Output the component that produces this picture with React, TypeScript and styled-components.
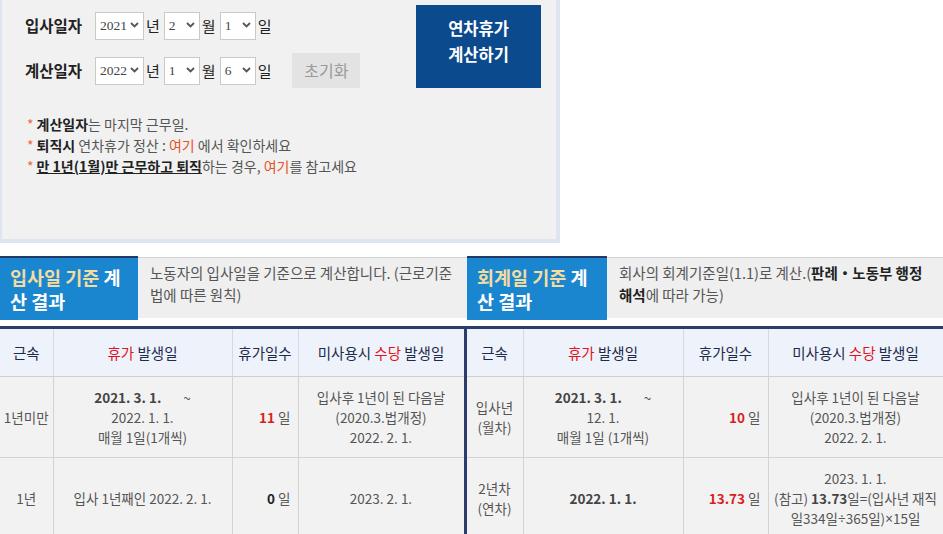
import React from 'react';
import styled, { createGlobalStyle } from 'styled-components';

const GlobalStyle = createGlobalStyle`
  html, body {
    margin: 0;
    padding: 0;
    overflow: hidden;
    background: #fff;
  }
  body {
    font-family: 'Noto Sans CJK KR', 'Noto Sans', sans-serif;
    color: #555;
  }
  * {
    box-sizing: border-box;
  }
`;

const Page = styled.div`
  width: 943px;
`;

// 상단 입력 패널
const Panel = styled.div`
  width: 560px;
  height: 243px;
  background: #f1f1f1;
  border: 4px solid #dee5f0;
  border-top: none;
  border-left-width: 2px;
  display: flex;
  justify-content: space-between;
  align-items: flex-start;
  padding: 5px 15px 0 23px;
`;

const FormCol = styled.div`
  display: flex;
  flex-direction: column;
  padding-top: 2.5px;
`;

const FormRows = styled.div`
  display: flex;
  flex-direction: column;
  gap: 10px;
`;

const FormRow = styled.div`
  display: flex;
  align-items: center;
  height: 35px;
`;

const Label = styled.div`
  width: 70px;
  font-size: 15.5px;
  font-weight: 700;
  color: #222;
`;

const SelectWrap = styled.div<{ $w: number }>`
  position: relative;
  width: ${(p) => p.$w}px;
  height: 28px;
`;

const Select = styled.select`
  appearance: none;
  -webkit-appearance: none;
  width: 100%;
  height: 100%;
  border: 1px solid #c9c9c9;
  border-radius: 0;
  background: #fff;
  padding: 0 0 0 4px;
  font-family: 'Liberation Serif', serif;
  font-size: 13.5px;
  color: #444;
  outline: none;
`;

const Chevron = styled.svg`
  position: absolute;
  right: 5px;
  top: 11px;
  pointer-events: none;
`;

const Unit = styled.span`
  margin: 0 4px 0 2px;
  font-size: 15px;
  color: #222;
`;

const ResetButton = styled.button`
  margin-left: 17px;
  width: 68px;
  height: 35px;
  border: none;
  background: #e3e3e3;
  color: #9a9a9a;
  font-family: inherit;
  font-size: 16px;
  padding: 0;
`;

const Notes = styled.div`
  margin-top: 26px;
  padding-left: 2px;
  font-size: 14px;
  line-height: 21px;
  color: #555;
`;

const Star = styled.span`
  color: #ea6a37;
  margin-right: 3px;
`;

const Strong = styled.b<{ $underline?: boolean }>`
  color: #222;
  font-weight: 700;
  text-decoration: ${(p) => (p.$underline ? 'underline' : 'none')};
`;

const Here = styled.span`
  color: #e8501f;
`;

const CalcButton = styled.button`
  width: 125px;
  height: 83px;
  border: none;
  background: #0b4a8c;
  color: #fff;
  font-family: inherit;
  font-size: 16.5px;
  font-weight: 700;
  line-height: 26px;
  padding: 10px 0 0;
  align-self: flex-start;
  display: flex;
  flex-direction: column;
  align-items: center;
  justify-content: flex-start;
`;

// 결과 제목 영역
const ResultHead = styled.div`
  margin-top: 13px;
  display: flex;
  height: 64px;
`;

const Half = styled.div<{ $w: number }>`
  width: ${(p) => p.$w}px;
  display: flex;
`;

const TitleBox = styled.div<{ $w: number }>`
  width: ${(p) => p.$w}px;
  background: #1a86cf;
  border-top: 2px solid #233a66;
  color: #fff;
  font-size: 18.5px;
  font-weight: 700;
  line-height: 24px;
  padding: 7px 0 0 10px;
  white-space: nowrap;
  overflow: hidden;
`;

const TitleLine = styled.div``;

const Accent = styled.span`
  color: #f4dca0;
`;

const Desc = styled.div`
  flex: 1;
  margin-top: 1px;
  margin-bottom: 2px;
  background: #efefef;
  border-top: 1px solid #d2d2d2;
  padding: 4px 6px 0 12px;
  font-size: 14.5px;
  line-height: 22px;
  color: #555;
  white-space: nowrap;
  overflow: hidden;
`;

// 결과 표
const Table = styled.table`
  margin-top: 6px;
  width: 943px;
  border-collapse: collapse;
  table-layout: fixed;
  border-top: 3px solid #2c3c6c;
`;

const Th = styled.th<{ $divider?: boolean }>`
  height: 49px;
  background: #eef2fa;
  font-size: 14.5px;
  font-weight: 400;
  color: #1d2b4c;
  border-right: 1px solid #d6d9e0;
  border-bottom: 1px solid #cfcfcf;
  border-left: ${(p) => (p.$divider ? '3px solid #2c3c6c' : 'none')};
  padding: 0;
  white-space: nowrap;
`;

const Td = styled.td<{ $divider?: boolean; $right?: boolean }>`
  height: 81px;
  background: #f2f2f2;
  font-size: 13.5px;
  line-height: 20px;
  color: #555;
  text-align: ${(p) => (p.$right ? 'right' : 'center')};
  vertical-align: middle;
  border-right: 1px solid #d3d3d3;
  border-bottom: 1px solid #d3d3d3;
  border-left: ${(p) => (p.$divider ? '3px solid #2c3c6c' : 'none')};
  padding: ${(p) => (p.$right ? '0 7px 0 2px' : '0 1px')};
`;

const Red = styled.span`
  color: #e0141e;
`;

const Num = styled.b<{ $red?: boolean }>`
  font-weight: 700;
  color: ${(p) => (p.$red ? '#d81e1e' : '#222')};
`;

const DateB = styled.b`
  font-weight: 700;
  color: #444;
`;

const Tilde = styled.span`
  margin-left: 22px;
`;

const Sym = styled.span`
  font-family: 'Noto Sans', 'DejaVu Sans', sans-serif;
`;

const Line = styled.div`
  white-space: nowrap;
`;

const ChevronIcon = () => (
  <Chevron width="9" height="6" viewBox="0 0 9 6">
    <path d="M1 1 L4.5 4.5 L8 1" fill="none" stroke="#555" strokeWidth="1.8" />
  </Chevron>
);

interface DateSel {
  year: string;
  month: string;
  day: string;
}

const DateSelects = ({ value }: { value: DateSel }) => (
  <>
    <SelectWrap $w={49}>
      <Select defaultValue={value.year}>
        {['2019', '2020', '2021', '2022', '2023'].map((y) => (
          <option key={y}>{y}</option>
        ))}
      </Select>
      <ChevronIcon />
    </SelectWrap>
    <Unit>년</Unit>
    <SelectWrap $w={36}>
      <Select defaultValue={value.month}>
        {Array.from({ length: 12 }, (_, i) => String(i + 1)).map((m) => (
          <option key={m}>{m}</option>
        ))}
      </Select>
      <ChevronIcon />
    </SelectWrap>
    <Unit>월</Unit>
    <SelectWrap $w={36}>
      <Select defaultValue={value.day}>
        {Array.from({ length: 31 }, (_, i) => String(i + 1)).map((d) => (
          <option key={d}>{d}</option>
        ))}
      </Select>
      <ChevronIcon />
    </SelectWrap>
    <Unit>일</Unit>
  </>
);

const App = () => {
  return (
    <Page>
      <GlobalStyle />
      <Panel>
        <FormCol>
          <FormRows>
            <FormRow>
              <Label>입사일자</Label>
              <DateSelects value={{ year: '2021', month: '2', day: '1' }} />
            </FormRow>
            <FormRow>
              <Label>계산일자</Label>
              <DateSelects value={{ year: '2022', month: '1', day: '6' }} />
              <ResetButton>초기화</ResetButton>
            </FormRow>
          </FormRows>
          <Notes>
            <div>
              <Star>*</Star>
              <Strong>계산일자</Strong>는 마지막 근무일.
            </div>
            <div>
              <Star>*</Star>
              <Strong>퇴직시</Strong> 연차휴가 정산 : <Here>여기</Here> 에서 확인하세요
            </div>
            <div>
              <Star>*</Star>
              <Strong $underline>만 1년(1월)만 근무하고 퇴직</Strong>하는 경우, <Here>여기</Here>를
              참고세요
            </div>
          </Notes>
        </FormCol>
        <CalcButton>
          <span>연차휴가</span>
          <span>계산하기</span>
        </CalcButton>
      </Panel>

      <ResultHead>
        <Half $w={467}>
          <TitleBox $w={138}>
            <TitleLine>
              <Accent>입사일 기준</Accent> 계
            </TitleLine>
            <TitleLine>산 결과</TitleLine>
          </TitleBox>
          <Desc>
            노동자의 입사일을 기준으로 계산합니다. (근로기준
            <br />
            법에 따른 원칙)
          </Desc>
        </Half>
        <Half $w={476}>
          <TitleBox $w={140}>
            <TitleLine>
              <Accent>회계일 기준</Accent> 계
            </TitleLine>
            <TitleLine>산 결과</TitleLine>
          </TitleBox>
          <Desc>
            회사의 회계기준일(1.1)로 계산.(<Strong>판례・노동부 행정</Strong>
            <br />
            <Strong>해석</Strong>에 따라 가능)
          </Desc>
        </Half>
      </ResultHead>

      <Table>
        <colgroup>
          <col style={{ width: 53 }} />
          <col style={{ width: 179 }} />
          <col style={{ width: 66 }} />
          <col style={{ width: 167 }} />
          <col style={{ width: 58 }} />
          <col style={{ width: 160 }} />
          <col style={{ width: 85 }} />
          <col style={{ width: 175 }} />
        </colgroup>
        <thead>
          <tr>
            <Th>근속</Th>
            <Th>
              <Red>휴가</Red> 발생일
            </Th>
            <Th>휴가일수</Th>
            <Th>
              미사용시 <Red>수당</Red> 발생일
            </Th>
            <Th $divider>근속</Th>
            <Th>
              <Red>휴가</Red> 발생일
            </Th>
            <Th>휴가일수</Th>
            <Th>
              미사용시 <Red>수당</Red> 발생일
            </Th>
          </tr>
        </thead>
        <tbody>
          <tr>
            <Td>1년미만</Td>
            <Td>
              <Line>
                <DateB>2021. 3. 1.</DateB>
                <Tilde>~</Tilde>
              </Line>
              <Line>2022. 1. 1.</Line>
              <Line>매월 1일(1개씩)</Line>
            </Td>
            <Td $right>
              <Num $red>11</Num> 일
            </Td>
            <Td>
              <Line>입사후 1년이 된 다음날</Line>
              <Line>(2020.3.법개정)</Line>
              <Line>2022. 2. 1.</Line>
            </Td>
            <Td $divider>
              <Line>입사년</Line>
              <Line>(월차)</Line>
            </Td>
            <Td>
              <Line>
                <DateB>2021. 3. 1.</DateB>
                <Tilde>~</Tilde>
              </Line>
              <Line>12. 1.</Line>
              <Line>매월 1일 (1개씩)</Line>
            </Td>
            <Td $right>
              <Num $red>10</Num> 일
            </Td>
            <Td>
              <Line>입사후 1년이 된 다음날</Line>
              <Line>(2020.3.법개정)</Line>
              <Line>2022. 2. 1.</Line>
            </Td>
          </tr>
          <tr>
            <Td>1년</Td>
            <Td>입사 1년째인 2022. 2. 1.</Td>
            <Td $right>
              <Num>0</Num> 일
            </Td>
            <Td>2023. 2. 1.</Td>
            <Td $divider>
              <Line>2년차</Line>
              <Line>(연차)</Line>
            </Td>
            <Td>
              <DateB>2022. 1. 1.</DateB>
            </Td>
            <Td $right>
              <Num $red>13.73</Num> 일
            </Td>
            <Td>
              <Line>2023. 1. 1.</Line>
              <Line>
                (참고) <DateB>13.73</DateB>일=(입사년 재직
              </Line>
              <Line>
                일334일<Sym>÷</Sym>365일)<Sym>×</Sym>15일
              </Line>
            </Td>
          </tr>
        </tbody>
      </Table>
    </Page>
  );
};

export default App;
